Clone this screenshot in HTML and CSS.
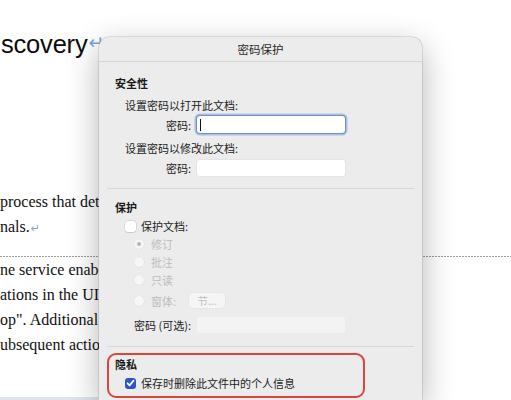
FILE: index.html
```html
<!DOCTYPE html>
<html lang="zh">
<head>
<meta charset="utf-8">
<link rel="stylesheet" href="styles.css">
</head>
<body>
<div class="doc">
  <div class="title-line">scovery<span class="mark big">↵</span></div>
  <p class="para first">
    <span class="line">process that det</span>
    <span class="line">nals.<span class="mark">↵</span></span>
  </p>
  <div class="dash"></div>
  <p class="para">
    <span class="line">ne service enab</span>
    <span class="line">ations in the UI</span>
    <span class="line">op". Additional</span>
    <span class="line">ubsequent actio</span>
  </p>
  <div class="strip"></div>
</div>

<div class="dialog">
  <div class="titlebar">密码保护</div>

  <section class="sec sec-security">
    <div class="heading">安全性</div>
    <div class="sub">设置密码以打开此文档:</div>
    <div class="field f1">
      <span class="flabel">密码:</span>
      <div class="input focused"><span class="caret"></span></div>
    </div>
    <div class="sub sub2">设置密码以修改此文档:</div>
    <div class="field f2">
      <span class="flabel">密码:</span>
      <div class="input"></div>
    </div>
  </section>

  <div class="sep s1"></div>

  <section class="sec sec-protect">
    <div class="heading">保护</div>
    <div class="check-row">
      <span class="box"></span><span>保护文档:</span>
    </div>
    <div class="radios">
      <div class="radio-row"><span class="radio on"></span><span>修订</span></div>
      <div class="radio-row"><span class="radio"></span><span>批注</span></div>
      <div class="radio-row"><span class="radio"></span><span>只读</span></div>
      <div class="radio-row form-row"><span class="radio"></span><span>窗体:</span><span class="btn">节...</span></div>
    </div>
    <div class="field f3">
      <span class="flabel">密码 (可选):</span>
      <div class="input disabled"></div>
    </div>
  </section>

  <div class="sep s2"></div>

  <section class="privacy">
    <div class="heading">隐私</div>
    <div class="check-row">
      <span class="box checked">
        <svg viewBox="0 0 12 12" width="12" height="12"><path d="M2.8 6.3 L5 8.6 L9.3 3.4" fill="none" stroke="#fff" stroke-width="1.9" stroke-linecap="round" stroke-linejoin="round"/></svg>
      </span>
      <span>保存时删除此文件中的个人信息</span>
    </div>
  </section>
</div>
</body>
</html>
```

FILE: styles.css
```css
html, body {
  margin: 0;
  padding: 0;
  background: #ffffff;
  width: 511px;
  height: 400px;
  overflow: hidden;
}

.doc {
  position: relative;
  width: 511px;
  height: 400px;
  padding-top: 27px;
  box-sizing: border-box;
  font-family: "Liberation Serif", "Times New Roman", serif;
  color: #111;
}

.title-line {
  font-family: "Liberation Sans", Arial, sans-serif;
  font-size: 25.5px;
  line-height: 30px;
  height: 30px;
  padding-left: 1px;
  white-space: nowrap;
  letter-spacing: -0.2px;
  color: #0c0c0c;
}

.mark {
  color: #7aa6d8;
  font-family: "DejaVu Sans", sans-serif;
  font-size: 11px;
  margin-left: 1px;
}

.mark.big {
  font-size: 19px;
  vertical-align: 4px;
  margin-left: 1px;
}

.para {
  margin: 0;
  font-size: 16px;
  line-height: 25px;
  white-space: nowrap;
}

.para.first {
  margin-top: 132px;
  margin-bottom: 17px;
}

.line {
  display: block;
  height: 25px;
}

.dash {
  height: 1px;
  background: repeating-linear-gradient(90deg, #9c9c9c 0 2px, transparent 2px 3px);
}

.strip {
  position: absolute;
  left: 0;
  bottom: 0;
  width: 98px;
  height: 3px;
  background: #dfe4ec;
}

/* dialog window */
.dialog {
  position: absolute;
  left: 99px;
  top: 37px;
  width: 323px;
  height: 363px;
  background: #ececec;
  border-radius: 10px 10px 0 0;
  box-shadow: 0 0 0 0.5px rgba(0, 0, 0, 0.18), 0 10px 32px rgba(0, 0, 0, 0.3);
  font-family: "Noto Sans CJK SC", "Noto Sans", sans-serif;
  font-size: 11px;
  color: #1c1c1c;
}

.titlebar {
  height: 24px;
  line-height: 24px;
  text-align: center;
  font-size: 11.5px;
  color: #2a2a2a;
  border-bottom: 1px solid #d6d6d6;
}

.sec {
  padding-left: 16px;
}

.heading {
  font-weight: 700;
  line-height: 16px;
  height: 16px;
  color: #1a1a1a;
}

.sec-security {
  padding-top: 13px;
}

.sub {
  margin-top: 6px;
  margin-left: 10px;
  line-height: 16px;
  height: 16px;
}

.sub.sub2 {
  margin-top: 7px;
}

.field {
  display: grid;
  grid-template-columns: 76px 148px;
  column-gap: 6px;
  align-items: center;
}

.flabel {
  text-align: right;
  line-height: 16px;
}

.f1 { margin-top: 3px; }
.f2 { margin-top: 4px; }
.f3 { margin-top: 7px; }

.input {
  height: 16px;
  background: #ffffff;
  border-radius: 2px;
  box-shadow: 0 0 0 0.5px rgba(0, 0, 0, 0.06);
  position: relative;
}

.input.focused {
  height: 17px;
  box-shadow: 0 0 0 1px #6f8fcf, 0 0 0 2.5px rgba(120, 155, 220, 0.55);
  border-radius: 3px;
}

.caret {
  position: absolute;
  left: 3px;
  top: 3px;
  width: 1px;
  height: 12px;
  background: #111;
}

.input.disabled {
  background: #f3f3f3;
  box-shadow: none;
}

.sep {
  height: 1px;
  background: #d8d8d8;
  margin: 0 8px;
}

.sep.s1 { margin-top: 12px; }
.sep.s2 { margin-top: 13px; }

.sec-protect {
  padding-top: 10px;
}

.check-row {
  display: flex;
  align-items: center;
  gap: 5px;
  margin-top: 3px;
  margin-left: 10px;
  height: 16px;
  line-height: 16px;
}

.box {
  width: 11px;
  height: 11px;
  border-radius: 3px;
  background: #ffffff;
  box-shadow: 0 0 0 0.5px rgba(0, 0, 0, 0.14), 0 0.5px 1px rgba(0, 0, 0, 0.08);
  display: flex;
  align-items: center;
  justify-content: center;
}

.box.checked {
  background: #2f56c8;
  box-shadow: none;
}

.box.checked svg {
  display: block;
}

.radios {
  margin-top: 1px;
  margin-left: 19px;
  color: #bdbdbd;
}

.radio-row {
  display: flex;
  align-items: center;
  gap: 7px;
  height: 18px;
  line-height: 16px;
}

.radio-row.form-row {
  margin-top: 2px;
  height: 19px;
}

.radio {
  width: 10px;
  height: 10px;
  border-radius: 50%;
  background: #f6f6f6;
  box-shadow: 0 0 0 0.5px rgba(0, 0, 0, 0.05);
  display: flex;
  align-items: center;
  justify-content: center;
}

.radio.on::after {
  content: "";
  width: 4px;
  height: 4px;
  border-radius: 50%;
  background: #b5b5b5;
}

.btn {
  margin-left: 6px;
  width: 36px;
  height: 15px;
  line-height: 15px;
  border-radius: 4px;
  background: #f5f5f5;
  box-shadow: 0 0 0 0.5px rgba(0, 0, 0, 0.05);
  text-align: center;
  color: #c0c0c0;
  font-size: 10.5px;
}

.privacy {
  margin: 6px 0 0 8px;
  width: 258px;
  height: 45px;
  box-sizing: border-box;
  border: 2px solid #d9473c;
  border-radius: 9px;
  padding: 1px 0 0 6px;
}

.privacy .check-row {
  margin-top: 3px;
}
```
